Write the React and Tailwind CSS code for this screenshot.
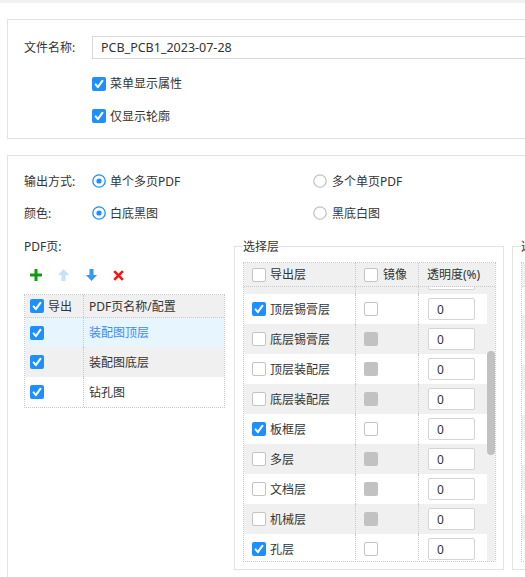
import React from 'react';

const BLUE = '#1e8fff';

function Check({ checked, disabled }) {
  if (checked) {
    return (
      <span className="w-[14px] h-[14px] rounded-[2px] bg-[#1e8fff] flex items-center justify-center shrink-0">
        <svg viewBox="0 0 14 14" className="w-[14px] h-[14px]">
          <path d="M3.6 7.4 L5.9 10.2 L10.5 3.7" stroke="white" strokeWidth="2" fill="none" strokeLinecap="round" strokeLinejoin="round" />
        </svg>
      </span>
    );
  }
  if (disabled) {
    return <span className="w-[14px] h-[14px] rounded-[2px] bg-[#c2c2c2] shrink-0" />;
  }
  return <span className="w-[14px] h-[14px] rounded-[2px] bg-white border border-[#c4c4c4] shrink-0" />;
}

function Radio({ checked }) {
  return (
    <svg viewBox="0 0 14 14" className="w-[14px] h-[14px] shrink-0">
      <circle cx="7" cy="7" r="6.2" fill="white" stroke={checked ? BLUE : '#c4c4c4'} strokeWidth="1.3" />
      {checked && <circle cx="7" cy="7" r="2.6" fill={BLUE} />}
    </svg>
  );
}

// first entry is the row scrolled mostly out of view
const layers = [
  { name: '', exp: false, hidden: true },
  { name: '顶层锡膏层', exp: true },
  { name: '底层锡膏层', exp: false },
  { name: '顶层装配层', exp: false },
  { name: '底层装配层', exp: false },
  { name: '板框层', exp: true },
  { name: '多层', exp: false },
  { name: '文档层', exp: false },
  { name: '机械层', exp: false },
  { name: '孔层', exp: true },
];

const pages = [
  { name: '装配图顶层', active: true, bg: 'bg-[#e6f5fe]', h: 'h-[29px]' },
  { name: '装配图底层', bg: 'bg-[#f0f0f0]', h: 'h-[30px]' },
  { name: '钻孔图', bg: 'bg-white', h: 'h-[30px]' },
];

function LayerTable() {
  return (
    <div className="mt-[7px] w-[253px] border border-dotted border-[#c8c8c8]">
      <div className="flex h-[24px] bg-[#f0f0f0] border-b border-dotted border-[#c8c8c8]">
        <div className="w-[112px] flex items-center gap-[4px] pl-[8px] border-r border-dotted border-[#c8c8c8]">
          <Check />
          <span>导出层</span>
        </div>
        <div className="w-[63px] flex items-center gap-[5px] pl-[8px] border-r border-dotted border-[#c8c8c8]">
          <Check />
          <span>镜像</span>
        </div>
        <div className="flex-1 flex items-center pl-[8px]">透明度(%)</div>
      </div>
      <div className="flex h-[274px] overflow-hidden">
        <div className="flex-1">
          <div className="-mt-[23px]">
            {layers.map((l, i) => (
              <div key={i} className={`flex h-[30px] ${i % 2 === 0 ? 'bg-[#f0f0f0]' : 'bg-white'}`}>
                <div className="w-[112px] flex items-center gap-[4px] pl-[8px] border-r border-dotted border-[#c8c8c8]">
                  {!l.hidden && <Check checked={l.exp} />}
                  {!l.hidden && <span>{l.name}</span>}
                </div>
                <div className="w-[63px] flex items-center pl-[8px] border-r border-dotted border-[#c8c8c8]">
                  {!l.hidden && <Check disabled={!l.exp} />}
                </div>
                <div className="flex-1 flex items-center pl-[9px]">
                  <div className="w-[47px] h-[22px] bg-white border border-[#d4d4d4] rounded-[2px] flex items-center pl-[8px]">
                    {l.hidden ? '' : '0'}
                  </div>
                </div>
              </div>
            ))}
          </div>
        </div>
        <div className="w-[8px] bg-[#f0f0f0] flex flex-col">
          <div className="mt-[64px] h-[104px] w-[8px] rounded-full bg-[#c1c1c1]" />
        </div>
      </div>
    </div>
  );
}

function SideTable() {
  const rows = Array.from({ length: 11 });
  return (
    <div className="mt-[7px] w-[253px] border border-dotted border-[#c8c8c8]">
      <div className="h-[24px] bg-[#f0f0f0] border-b border-dotted border-[#c8c8c8]" />
      <div className="h-[274px] overflow-hidden">
        <div className="h-[28px] bg-white" />
        {rows.map((_, i) => (
          <div key={i} className={`h-[25px] ${i % 2 === 0 ? 'bg-[#f0f0f0]' : 'bg-white'}`} />
        ))}
      </div>
    </div>
  );
}

export default function App() {
  return (
    <div className="w-[525px] h-[577px] overflow-hidden bg-white text-[12px] leading-[17px] text-[#333] font-['Noto_Sans','Noto_Sans_CJK_SC',sans-serif]">
      <div className="h-[3px] bg-[#f0f0f0]" />

      <div className="mt-[16px] ml-[7px] w-[620px] border border-[#e2e2e2] pt-[16px] pb-[6px] pl-[16px]">
        <div className="flex items-center h-[23px]">
          <span className="w-[68px]">文件名称:</span>
          <div className="flex-1 h-[23px] border border-[#d9d9d9] flex items-center pl-[8px] text-[12.5px]">PCB_PCB1_2023-07-28</div>
        </div>
        <div className="mt-[8px] pl-[68px]">
          <div className="flex items-center gap-[4px] h-[33px]">
            <Check checked />
            <span>菜单显示属性</span>
          </div>
          <div className="flex items-center gap-[4px] h-[32px]">
            <Check checked />
            <span>仅显示轮廓</span>
          </div>
        </div>
      </div>

      <div className="mt-[16px] ml-[7px] w-[620px] h-[440px] border border-[#e2e2e2] pt-[9px] pl-[16px]">
        <div className="flex items-center h-[32px]">
          <span className="w-[68px]">输出方式:</span>
          <div className="w-[221px] flex items-center gap-[4px]">
            <Radio checked />
            <span>单个多页PDF</span>
          </div>
          <div className="flex items-center gap-[5px]">
            <Radio />
            <span>多个单页PDF</span>
          </div>
        </div>
        <div className="flex items-center h-[32px]">
          <span className="w-[68px]">颜色:</span>
          <div className="w-[221px] flex items-center gap-[4px]">
            <Radio checked />
            <span>白底黑图</span>
          </div>
          <div className="flex items-center gap-[5px]">
            <Radio />
            <span>黑底白图</span>
          </div>
        </div>

        <div className="mt-[9px] flex items-start">
          <div className="w-[201px] shrink-0">
            <div>PDF页:</div>
            <div className="mt-[9px] h-[22px] flex items-center">
              <svg viewBox="0 0 14 14" className="ml-[5px] w-[14px] h-[14px]">
                <path d="M7 1 V13 M1 7 H13" stroke="#109c10" strokeWidth="3" />
              </svg>
              <svg viewBox="0 0 11 12" className="ml-[15px] w-[11px] h-[12px]">
                <path d="M5.5 0 L11 6 L7.5 6 L7.5 12 L3.5 12 L3.5 6 L0 6 Z" fill="#c4e2ff" />
              </svg>
              <svg viewBox="0 0 11 12" className="ml-[17px] w-[11px] h-[12px]">
                <path d="M5.5 12 L11 6 L7.5 6 L7.5 0 L3.5 0 L3.5 6 L0 6 Z" fill="#3b97f6" />
              </svg>
              <svg viewBox="0 0 11 11" className="ml-[16px] w-[11px] h-[11px]">
                <path d="M1.2 1.2 L9.8 9.8 M9.8 1.2 L1.2 9.8" stroke="#ff1010" strokeWidth="2.6" />
              </svg>
            </div>
            <div className="mt-[8px] border border-dotted border-[#c8c8c8]">
              <div className="flex h-[23px] bg-[#f0f0f0] border-b border-dotted border-[#c8c8c8]">
                <div className="w-[59px] flex items-center gap-[4px] pl-[5px] border-r border-dotted border-[#c8c8c8]">
                  <Check checked />
                  <span>导出</span>
                </div>
                <div className="flex-1 flex items-center pl-[5px]">PDF页名称/配置</div>
              </div>
              {pages.map((p) => (
                <div key={p.name} className={`flex ${p.h} ${p.bg}`}>
                  <div className="w-[59px] flex items-center pl-[5px] border-r border-dotted border-[#c8c8c8]">
                    <Check checked />
                  </div>
                  <div className={`flex-1 flex items-center pl-[5px] ${p.active ? 'text-[#3f8cf2]' : ''}`}>{p.name}</div>
                </div>
              ))}
            </div>
          </div>

          <fieldset className="ml-[9px] w-[270px] shrink-0 border border-[#e2e2e2] pl-[8px] pr-[7px] pb-[7px]">
            <legend>选择层</legend>
            <LayerTable />
          </fieldset>

          <fieldset className="ml-[8px] w-[270px] shrink-0 border border-[#e2e2e2] pl-[8px] pr-[7px] pb-[7px]">
            <legend>选择层</legend>
            <SideTable />
          </fieldset>
        </div>
      </div>
    </div>
  );
}
